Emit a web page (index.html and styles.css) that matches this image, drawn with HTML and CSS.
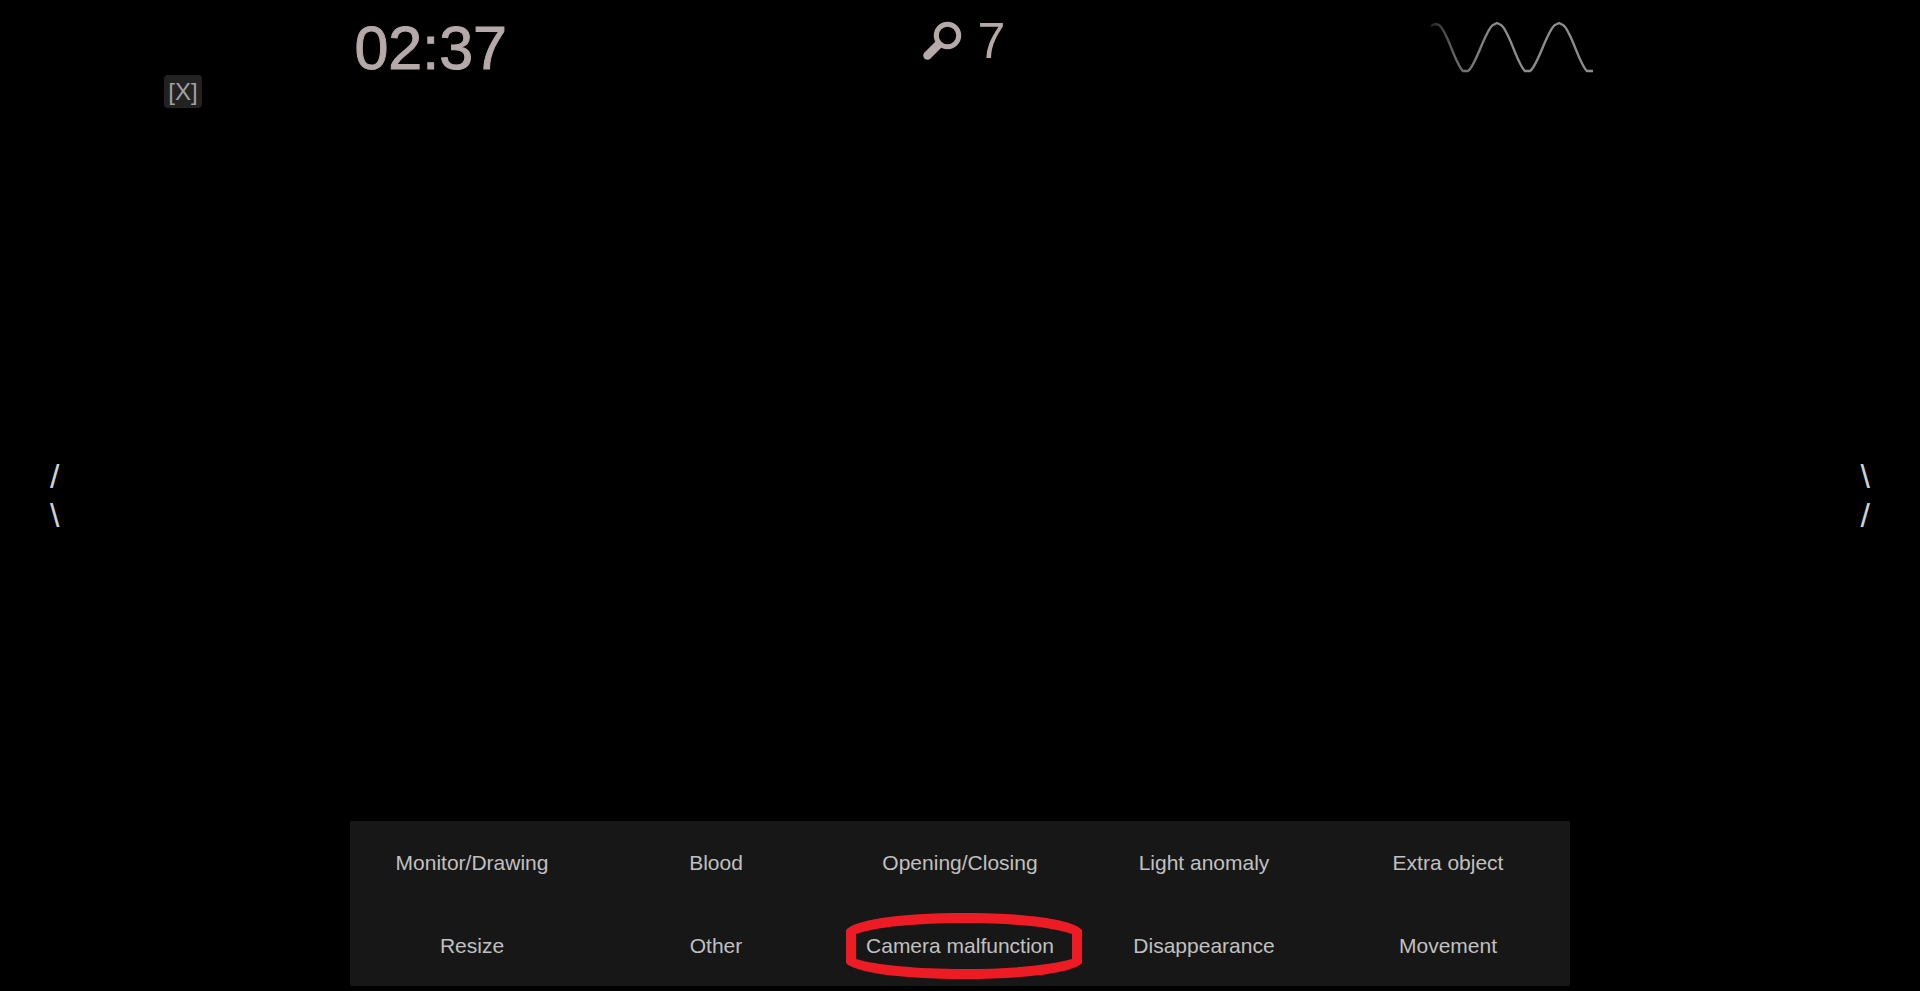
FILE: index.html
```html
<!DOCTYPE html>
<html lang="en">
<head>
    <meta charset="UTF-8">
    <meta name="viewport" content="width=device-width, initial-scale=1.0">
    <title>Camera Watch</title>
    <link rel="stylesheet" href="styles.css">
</head>
<body>
    <header class="hud">
        <div class="timer">02:37</div>
        <div class="score">
            <svg class="icon-search" viewBox="0 0 44 44" aria-hidden="true">
                <circle cx="28.5" cy="16.5" r="11.2" fill="none" stroke="#b5a9a9" stroke-width="5"/>
                <path d="M19 26 L8.5 36.5" stroke="#b5a9a9" stroke-width="8.5" stroke-linecap="round"/>
            </svg>
            <span>7</span>
        </div>
        <svg class="wave" viewBox="0 0 164 56" aria-hidden="true">
            <defs>
                <linearGradient id="waveFade" gradientUnits="userSpaceOnUse" x1="0" y1="0" x2="164" y2="0">
                    <stop offset="0" stop-color="#222"/>
                    <stop offset="0.15" stop-color="#666"/>
                    <stop offset="0.4" stop-color="#8c8c8c"/>
                    <stop offset="1" stop-color="#8c8c8c"/>
                </linearGradient>
            </defs>
            <path d="M1 6 L5 4 L9 5 C17 10 25 44 33 51 L38 51 C46 46 55 10 63 5 L67 3 L71 5 C79 10 87 44 95 51 L100 51 C108 46 117 10 125 5 L129 3 L133 5 C141 10 149 44 157 51 L163 51" fill="none" stroke="url(#waveFade)" stroke-width="2.4" stroke-linejoin="round"/>
        </svg>
    </header>

    <div class="toolbar">
        <button class="btn-close">[X]</button>
    </div>

    <main class="view">
        <button class="btn-nav" aria-label="Previous camera">/<br>\</button>
        <button class="btn-nav" aria-label="Next camera">\<br>/</button>
    </main>

    <div class="report">
        <button>Monitor/Drawing</button>
        <button>Blood</button>
        <button>Opening/Closing</button>
        <button>Light anomaly</button>
        <button>Extra object</button>
        <button>Resize</button>
        <button>Other</button>
        <button class="marked">
            Camera malfunction
            <svg class="marker" viewBox="0 0 236 66" aria-hidden="true">
                <path fill="#ed1c24" fill-rule="evenodd" d="M0 17 C8 7 52 0 118 0 S228 7 236 17 V50 C228 59 184 66 118 66 S8 59 0 50 Z M10 21 V46 C30 52 70 56 118 56 S206 52 226 46 V21 C206 14 166 10 118 10 S30 14 10 21 Z"/>
            </svg>
        </button>
        <button>Disappearance</button>
        <button>Movement</button>
    </div>
</body>
</html>
```
FILE: styles.css
```css
* {
    box-sizing: border-box;
}

body {
    display: flex;
    flex-direction: column;
    min-height: 100vh;
    margin: 0;
    background-color: #000;
    color: #c0c0c0;
    font-family: "Liberation Sans", Arial, sans-serif;
}

button {
    padding: 0;
    border: none;
    background: none;
    color: inherit;
    font-family: inherit;
    cursor: pointer;
}

.hud {
    display: grid;
    grid-template-columns: 1fr auto 1fr;
    align-items: start;
    height: 75px;
    padding: 13px 17% 0;
    color: #b5a9a9;
}

.timer {
    padding-left: 28px;
    font-size: 61px;
    line-height: 70px;
    -webkit-text-stroke: 1px #b5a9a9;
}

.score {
    display: flex;
    align-items: center;
    gap: 15px;
    padding-left: 4px;
    font-size: 50px;
    line-height: 56px;
}

.icon-search {
    width: 44px;
    height: 44px;
}

.wave {
    justify-self: end;
    width: 164px;
    height: 56px;
    margin-top: 7px;
}

.toolbar {
    padding-left: 164px;
}

.btn-close {
    display: block;
    width: 38px;
    height: 33px;
    border-radius: 4px;
    background-color: #222;
    color: #a0a0a0;
    font-size: 24px;
    line-height: 32px;
    text-align: center;
}

.view {
    display: flex;
    flex: 1;
    justify-content: space-between;
    align-items: center;
    padding: 62px 50px 0;
}

.btn-nav {
    color: #d0d0d0;
    font-size: 34px;
    line-height: 39px;
}

.report {
    display: grid;
    grid-template-columns: repeat(5, 1fr);
    row-gap: 1px;
    width: 1220px;
    max-width: 100%;
    margin: 0 auto 5px;
    border-radius: 2px;
    background-color: #171717;
}

.report button {
    padding: 29px 0 28px;
    font-size: 21px;
    line-height: 25px;
}

.report .marked {
    position: relative;
}

.marker {
    position: absolute;
    right: 0;
    bottom: 7px;
    width: 236px;
    height: 66px;
}

button:hover {
    color: #fff;
}
```
